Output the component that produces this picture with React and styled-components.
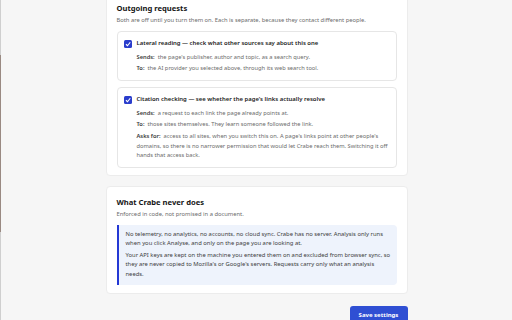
import styled, { createGlobalStyle } from "styled-components";

const Global = createGlobalStyle`
  html, body {
    margin: 0;
    padding: 0;
    background: #f6f6f6;
    overflow: hidden;
  }
  body {
    font-family: "Noto Sans", "Liberation Sans", sans-serif;
    color: #1b1b1b;
    border-left: 1px solid #cfcfcf;
    height: 320px;
    box-sizing: border-box;
  }
`;

const EdgeMark = styled.div`
  position: fixed;
  left: 0;
  top: 55px;
  width: 1px;
  height: 177px;
  background: #9a8a82;
`;

const Page = styled.div`
  width: 302px;
  margin: -8px auto 0;
  display: flex;
  flex-direction: column;
  gap: 10px;
`;

const Card = styled.section`
  background: #fff;
  border: 1px solid #ececec;
  border-radius: 4px;
  padding: 10px 10px ${(p) => p.$bottom || 7}px;
`;

const Title = styled.h2`
  margin: 0;
  font-size: 7.6px;
  line-height: 10px;
  font-weight: 700;
  color: #161616;
`;

const Lead = styled.p`
  margin: 3px 0 6px;
  font-size: 5.8px;
  line-height: 9px;
  color: #6b6b6b;
`;

const Options = styled.div`
  display: flex;
  flex-direction: column;
  gap: 6px;
`;

const Option = styled.div`
  border: 1px solid #e6e6e6;
  border-radius: 4px;
  padding: 7px 6px 6px 6.5px;
`;

const OptionHead = styled.label`
  display: flex;
  align-items: center;
  gap: 4.5px;
  font-size: 5.95px;
  line-height: 9px;
  font-weight: 600;
  color: #222;
`;

const Box = styled.span`
  width: 8px;
  height: 8px;
  border-radius: 1.5px;
  background: #2a3dcc;
  display: flex;
  align-items: center;
  justify-content: center;
  flex: none;
`;

const Details = styled.div`
  margin: 5px 0 0 12.5px;
  display: flex;
  flex-direction: column;
  gap: 1.7px;
`;

const Detail = styled.div`
  font-size: 5.72px;
  line-height: 9.7px;
  color: #6b6b6b;
`;

const Key = styled.span`
  font-weight: 600;
  color: #3a3a3a;
  margin-right: 3px;
`;

const Note = styled.div`
  background: #eef3fc;
  border-left: 2px solid #2438d4;
  border-radius: 0 4px 4px 0;
  padding: 5px 6px 6px 7px;
  display: flex;
  flex-direction: column;
  gap: 2px;
`;

const NoteText = styled.p`
  margin: 0;
  font-size: 5.85px;
  line-height: 9.5px;
  color: #3d3d3d;
`;

const Actions = styled.div`
  display: flex;
  justify-content: flex-end;
  padding-top: 2px;
`;

const SaveButton = styled.button`
  background: #2f4fd3;
  color: #fff;
  border: none;
  border-radius: 3px;
  font-family: inherit;
  font-size: 6px;
  line-height: 9px;
  font-weight: 700;
  white-space: nowrap;
  padding: 5px 0 8px;
  width: 58px;
`;

const Check = () => (
  <Box>
    <svg width="6" height="6" viewBox="0 0 12 12">
      <path d="M2 6.5 L5 9.5 L10.5 2.5" fill="none" stroke="#fff" strokeWidth="2.2" />
    </svg>
  </Box>
);

const App = () => (
  <>
    <Global />
    <EdgeMark />
    <Page>
      <Card>
        <Title>Outgoing requests</Title>
        <Lead>Both are off until you turn them on. Each is separate, because they contact different people.</Lead>
        <Options>
          <Option>
            <OptionHead>
              <Check />
              Lateral reading — check what other sources say about this one
            </OptionHead>
            <Details>
              <Detail><Key>Sends:</Key>the page's publisher, author and topic, as a search query.</Detail>
              <Detail><Key>To:</Key>the AI provider you selected above, through its web search tool.</Detail>
            </Details>
          </Option>
          <Option>
            <OptionHead>
              <Check />
              Citation checking — see whether the page's links actually resolve
            </OptionHead>
            <Details>
              <Detail><Key>Sends:</Key>a request to each link the page already points at.</Detail>
              <Detail><Key>To:</Key>those sites themselves. They learn someone followed the link.</Detail>
              <Detail><Key>Asks for:</Key>access to all sites, when you switch this on. A page's links point at other people's domains, so there is no narrower permission that would let Crabe reach them. Switching it off hands that access back.</Detail>
            </Details>
          </Option>
        </Options>
      </Card>
      <Card $bottom={8}>
        <Title>What Crabe never does</Title>
        <Lead>Enforced in code, not promised in a document.</Lead>
        <Note>
          <NoteText>No telemetry, no analytics, no accounts, no cloud sync. Crabe has no server. Analysis only runs when you click Analyse, and only on the page you are looking at.</NoteText>
          <NoteText>Your API keys are kept on the machine you entered them on and excluded from browser sync, so they are never copied to Mozilla's or Google's servers. Requests carry only what an analysis needs.</NoteText>
        </Note>
      </Card>
      <Actions>
        <SaveButton>Save settings</SaveButton>
      </Actions>
    </Page>
  </>
);

export default App;
